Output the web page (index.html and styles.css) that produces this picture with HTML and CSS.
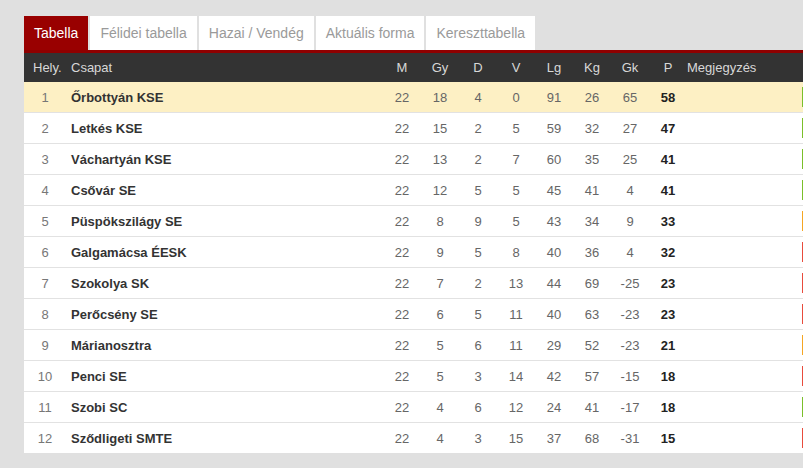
FILE: index.html
```html
<!DOCTYPE html>
<html lang="hu">
<head>
<meta charset="utf-8">
<title>Tabella</title>
<link rel="stylesheet" href="styles.css">
</head>
<body>
<div class="wrap">
  <nav class="tabs">
    <span class="tab active">Tabella</span>
    <span class="tab">Félidei tabella</span>
    <span class="tab">Hazai / Vendég</span>
    <span class="tab">Aktuális forma</span>
    <span class="tab">Kereszttabella</span>
  </nav>
  <table class="standings">
    <colgroup>
      <col class="c-hely"><col class="c-team">
      <col class="c-num"><col class="c-num"><col class="c-num"><col class="c-num">
      <col class="c-num"><col class="c-num"><col class="c-num"><col class="c-num">
      <col class="c-note"><col class="c-stat">
    </colgroup>
    <thead>
      <tr>
        <th class="hely">Hely.</th><th class="team">Csapat</th>
        <th>M</th><th>Gy</th><th>D</th><th>V</th><th>Lg</th><th>Kg</th><th>Gk</th><th>P</th>
        <th class="note">Megjegyzés</th><th></th>
      </tr>
    </thead>
    <tbody>
      <tr class="hl"><td class="hely">1</td><td class="team">Őrbottyán KSE</td><td>22</td><td>18</td><td>4</td><td>0</td><td>91</td><td>26</td><td>65</td><td class="pts">58</td><td></td><td><span class="bar green"></span></td></tr>
      <tr><td class="hely">2</td><td class="team">Letkés KSE</td><td>22</td><td>15</td><td>2</td><td>5</td><td>59</td><td>32</td><td>27</td><td class="pts">47</td><td></td><td><span class="bar green"></span></td></tr>
      <tr><td class="hely">3</td><td class="team">Váchartyán KSE</td><td>22</td><td>13</td><td>2</td><td>7</td><td>60</td><td>35</td><td>25</td><td class="pts">41</td><td></td><td><span class="bar green"></span></td></tr>
      <tr><td class="hely">4</td><td class="team">Csővár SE</td><td>22</td><td>12</td><td>5</td><td>5</td><td>45</td><td>41</td><td>4</td><td class="pts">41</td><td></td><td><span class="bar green"></span></td></tr>
      <tr><td class="hely">5</td><td class="team">Püspökszilágy SE</td><td>22</td><td>8</td><td>9</td><td>5</td><td>43</td><td>34</td><td>9</td><td class="pts">33</td><td></td><td><span class="bar orange"></span></td></tr>
      <tr><td class="hely">6</td><td class="team">Galgamácsa ÉESK</td><td>22</td><td>9</td><td>5</td><td>8</td><td>40</td><td>36</td><td>4</td><td class="pts">32</td><td></td><td><span class="bar red"></span></td></tr>
      <tr><td class="hely">7</td><td class="team">Szokolya SK</td><td>22</td><td>7</td><td>2</td><td>13</td><td>44</td><td>69</td><td>-25</td><td class="pts">23</td><td></td><td><span class="bar red"></span></td></tr>
      <tr><td class="hely">8</td><td class="team">Perőcsény SE</td><td>22</td><td>6</td><td>5</td><td>11</td><td>40</td><td>63</td><td>-23</td><td class="pts">23</td><td></td><td><span class="bar red"></span></td></tr>
      <tr><td class="hely">9</td><td class="team">Márianosztra</td><td>22</td><td>5</td><td>6</td><td>11</td><td>29</td><td>52</td><td>-23</td><td class="pts">21</td><td></td><td><span class="bar orange"></span></td></tr>
      <tr><td class="hely">10</td><td class="team">Penci SE</td><td>22</td><td>5</td><td>3</td><td>14</td><td>42</td><td>57</td><td>-15</td><td class="pts">18</td><td></td><td><span class="bar red"></span></td></tr>
      <tr><td class="hely">11</td><td class="team">Szobi SC</td><td>22</td><td>4</td><td>6</td><td>12</td><td>24</td><td>41</td><td>-17</td><td class="pts">18</td><td></td><td><span class="bar green"></span></td></tr>
      <tr><td class="hely">12</td><td class="team">Sződligeti SMTE</td><td>22</td><td>4</td><td>3</td><td>15</td><td>37</td><td>68</td><td>-31</td><td class="pts">15</td><td></td><td><span class="bar red"></span></td></tr>
    </tbody>
  </table>
</div>
</body>
</html>
```
FILE: styles.css
```css
html, body {
  margin: 0;
  padding: 0;
  background: #e0e0e0;
  overflow: hidden;
}
body {
  width: 803px;
  height: 468px;
  font-family: "Liberation Sans", Arial, sans-serif;
}
.wrap {
  padding: 16px 0 0 24px;
  width: 800px;
}
.tabs {
  display: flex;
  gap: 2px;
  border-bottom: 3px solid #8f0000;
  height: 34px;
}
.tab {
  background: #fff;
  color: #9a9a9a;
  font-size: 14px;
  line-height: 34px;
  padding: 0 10px;
  white-space: nowrap;
}
.tab.active {
  background: #990000;
  color: #fff;
}
.standings {
  border-collapse: separate;
  border-spacing: 0;
  table-layout: fixed;
  width: 798px;
  font-size: 13px;
}
.c-hely { width: 42px; }
.c-team { width: 317px; }
.c-num { width: 38px; }
.c-note { width: 115px; }
.c-stat { width: 20px; }
.standings th {
  background: #333;
  color: #d8d8d8;
  font-weight: normal;
  height: 29px;
  padding: 0;
  text-align: center;
  white-space: nowrap;
}
.standings th.hely { text-align: left; padding-left: 9px; }
.standings th.team, .standings td.team { text-align: left; padding-left: 5px; }
.standings th.note { text-align: left; }
.standings td {
  background: #fff;
  color: #666;
  height: 30px;
  padding: 0;
  text-align: center;
  border-bottom: 1px solid #e2e2e2;
  white-space: nowrap;
}
.standings tbody tr:last-child td { border-bottom: 0; }
.standings tr.hl td { background: #fdf0c4; }
.standings td.hely { color: #777; }
.standings td.team { color: #333; font-weight: bold; }
.standings td.pts { color: #222; font-weight: bold; }
.standings td:last-child { text-align: left; vertical-align: middle; }
.bar {
  display: block;
  width: 4px;
  height: 20px;
}
.bar.green { background: #7bbf2a; }
.bar.orange { background: #f5a623; }
.bar.red { background: #e84c3d; }
```
